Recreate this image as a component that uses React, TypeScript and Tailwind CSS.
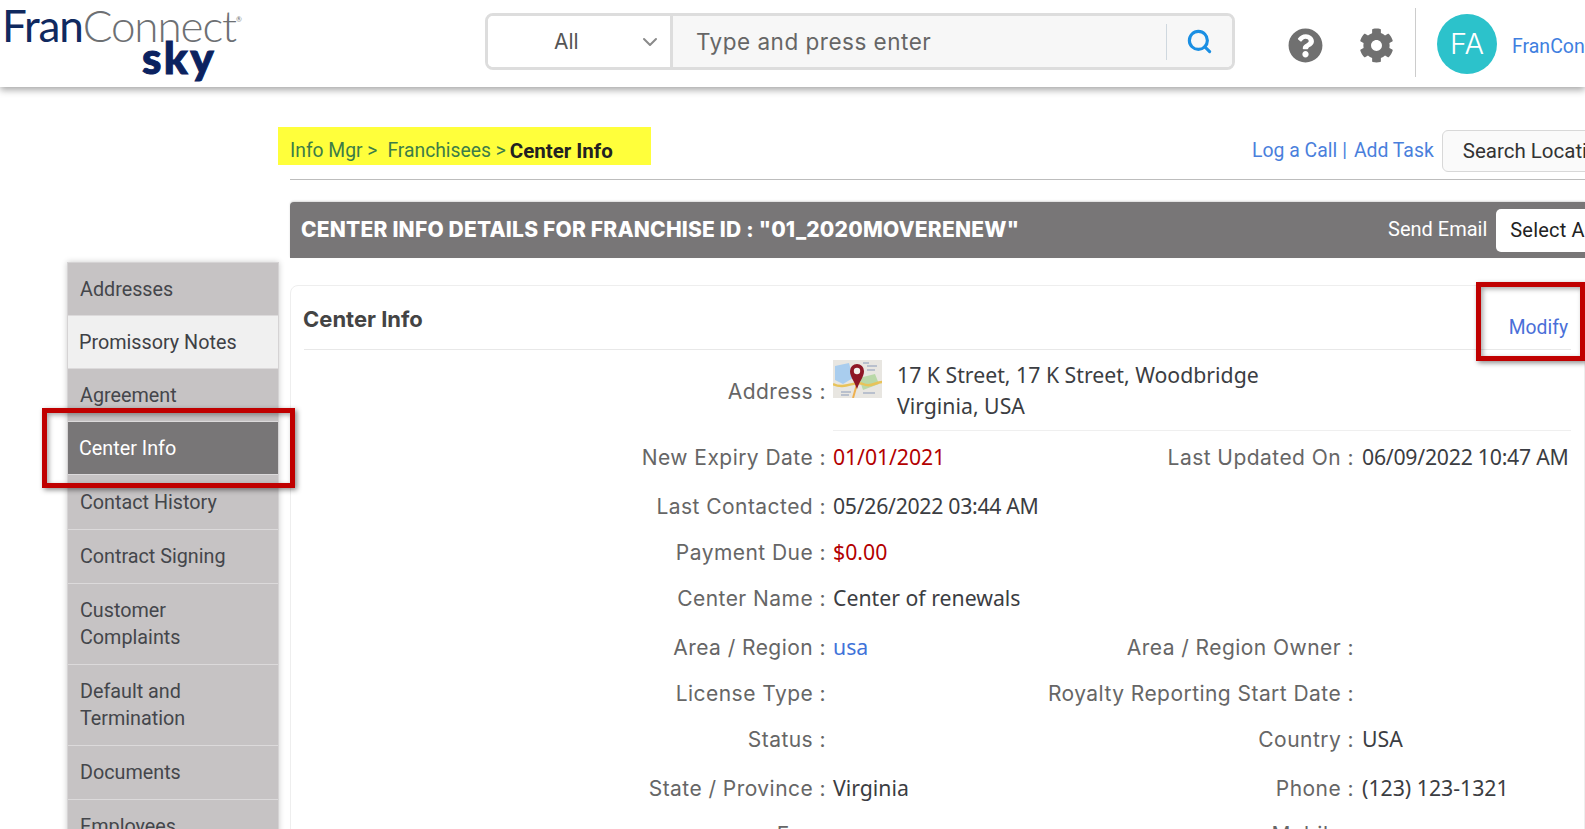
import { ChevronDown, Search } from "lucide-react";
import { FaCog, FaQuestionCircle } from "react-icons/fa";

const sidebarItems = [
    { label: "Addresses", cls: "h-[52px] bg-[#c6c3c4] text-[#44464b] pl-[12px]" },
    { label: "Promissory Notes", cls: "h-[52px] bg-[#f0f0f0] text-[#3e4045] pl-[11px]" },
    { label: "Agreement", cls: "h-[52px] bg-[#c6c3c4] text-[#44464b] pl-[12px]" },
    { label: "Center Info", cls: "h-[52px] bg-[#787677] text-white pl-[11px]" },
    { label: "Contact History", cls: "h-[54px] bg-[#c6c3c4] text-[#44464b] pl-[12px]" },
    { label: "Contract Signing", cls: "h-[53px] bg-[#c6c3c4] text-[#44464b] pl-[12px]" },
    { label: "Customer Complaints", cls: "h-[80px] bg-[#c6c3c4] text-[#44464b] pl-[12px] pr-[60px]" },
    { label: "Default and Termination", cls: "h-[80px] bg-[#c6c3c4] text-[#44464b] pl-[12px] pr-[60px]" },
    { label: "Documents", cls: "h-[53px] bg-[#c6c3c4] text-[#44464b] pl-[12px]" },
    { label: "Employees", cls: "h-[53px] bg-[#c6c3c4] text-[#44464b] pl-[12px]" },
];

function MapThumb() {
    return (
        <svg width="49" height="38" viewBox="0 0 49 38" className="shrink-0">
            <rect width="49" height="38" fill="#e8e6e1" />
            <path d="M2 6 L16 3 L20 18 L10 24 L2 20 Z" fill="#a9cdee" />
            <path d="M26 18 L42 14 L46 24 L30 30 Z" fill="#b9d8a8" />
            <path d="M0 24 C12 30 22 20 30 24 S42 22 49 22" stroke="#e8c35a" strokeWidth="2.5" fill="none" />
            <path d="M20 38 L24 24" stroke="#eeb04f" strokeWidth="2" />
            <path d="M8 32h10M8 35h8M30 33h12M34 6h10M34 10h8M30 3h6" stroke="#a9b4c6" strokeWidth="1.5" />
            <path d="M24 29 C21 20 17 17 17 11 A7 7 0 0 1 31 11 C31 17 27 20 24 29 Z" fill="#8f1726" />
            <circle cx="24" cy="11" r="3.2" fill="#f3f0ee" />
        </svg>
    );
}

const labelCls = "flex justify-end pt-[2px] font-['Inter',sans-serif] text-[21px] tracking-[0.45px] text-[#666666] whitespace-nowrap";

function Row({ cls, label, value, valueCls, label2, value2, value2Cls }: { cls?: string; label: string; value?: string; valueCls?: string; label2?: string; value2?: string; value2Cls?: string }) {
    return (
        <div className={`grid grid-cols-[522px_287px_241px_1fr] items-center h-[46px] ${cls ?? ""}`}>
            <div className={labelCls}>{label}</div>
            <div className={`pl-[7px] text-[21.25px] whitespace-nowrap ${valueCls ?? "text-[#3b3d42]"}`}>{value}</div>
            <div className={labelCls}>{label2}</div>
            <div className={`pl-2 text-[21.25px] text-[#3b3d42] whitespace-nowrap ${value2Cls ?? ""}`}>{value2}</div>
        </div>
    );
}

export default function App() {
    return (
        <div className="relative w-[1585px] h-[829px] overflow-hidden bg-white font-['Roboto',sans-serif]">
            {/* header */}
            <header className="relative z-10 h-[87px] flex items-start bg-white shadow-[0_3px_7px_rgba(0,0,0,0.35)]">
                <div className="w-[485px] shrink-0 pl-[2px] pt-[3px] font-['Lato',sans-serif] leading-none">
                    <div className="flex items-start text-[44px] tracking-[-1.1px] h-[41px]">
                        <span className="text-[#10295f]">Fran</span>
                        <span className="text-[#6d7073] font-light">Connect</span>
                        <span className="text-[7px] text-[#777] mt-[13px]">®</span>
                    </div>
                    <div className="pl-[140px] -mt-[6px] text-[44px] font-black tracking-[2.4px] text-[#0b2260] leading-[38px] [-webkit-text-stroke:1px_#0b2260]">sky</div>
                </div>
                <div className="mt-[13px] w-[750px] h-[57px] shrink-0 flex border-[3px] border-[#dddddd] rounded-[8px] overflow-hidden">
                    <div className="w-[185px] flex items-center bg-white border-r-[3px] border-[#dddddd] font-['Inter',sans-serif] text-[21px] text-[#555]">
                        <span className="ml-[66px]">All</span>
                        <ChevronDown size={24} className="ml-[59px] text-[#8a8a8a]" />
                    </div>
                    <div className="flex-1 flex items-center bg-[#f7f7f7] font-['Inter',sans-serif] text-[22.5px] tracking-[0.5px] text-[#666]">
                        <span className="ml-[23px]">Type and press enter</span>
                        <div className="ml-auto w-[66px] h-[36px] flex items-center justify-center border-l border-[#cfd8df]">
                            <Search size={27} strokeWidth={2.8} className="text-[#1b8fe3]" />
                        </div>
                    </div>
                </div>
                <FaQuestionCircle size={35} className="mt-[28px] ml-[53px] shrink-0 text-[#707070]" />
                <FaCog size={35} className="mt-[28px] ml-[36px] shrink-0 text-[#707070]" />
                <div className="mt-[8px] ml-[21px] w-px h-[69px] shrink-0 bg-[#cccccc]" />
                <div className="mt-[14px] ml-[21px] w-[60px] h-[60px] shrink-0 rounded-full bg-[#2cc2cb] flex items-center justify-center font-['Inter',sans-serif] font-light text-[29px] text-white">FA</div>
                <div className="mt-[32px] ml-[15px] text-[19.5px] text-[#3f7fe0] whitespace-nowrap">FranConnect Admin</div>
            </header>

            <div className="flex">
                {/* sidebar */}
                <div className="w-[278px] shrink-0 pl-[67px] pt-[175px]">
                    <nav className="w-[212px] flex flex-col gap-[1px] border border-[#d5d3d4] bg-[#dcdadb] shadow-[0_0_6px_rgba(0,0,0,0.2)]">
                        {sidebarItems.map((item) => (
                            <div key={item.label} className={`flex items-center text-[19.75px] leading-[27px] ${item.cls}`}>
                                <span>{item.label}</span>
                            </div>
                        ))}
                    </nav>
                </div>

                {/* content */}
                <main className="flex-1 min-w-0 pt-[40px]">
                    <div className="h-[38px] flex items-center whitespace-nowrap">
                        <div className="w-[373px] h-full shrink-0 flex items-center bg-[#ffff3b] pl-[12px] pt-[11px] text-[19.3px] text-[#3c7d48]">
                            <span>Info Mgr &gt;</span>
                            <span className="ml-[10px]">Franchisees &gt;</span>
                            <span className="ml-[4px] text-[20.5px] font-bold text-[#222]">Center Info</span>
                        </div>
                        <div className="ml-[601px] mt-[10px] flex items-center shrink-0 text-[19.4px] text-[#4a7fdc]">
                            <span>Log a Call</span>
                            <span className="ml-[5px]">|</span>
                            <span className="ml-[7px]">Add Task</span>
                            <div className="ml-[8px] w-[220px] h-[42px] pl-[20px] flex items-center border border-[#d8d8d8] rounded-l-[6px] bg-[#fafafa] text-[20.5px] text-[#333]">Search Location</div>
                        </div>
                    </div>
                    <div className="ml-[12px] mt-[14px] h-px bg-[#bdbdbd]" />

                    <div className="ml-[12px] mt-[22px] h-[56px] flex items-center bg-[#787677] rounded-tl-[4px] shadow-[0_-1px_2px_rgba(0,0,0,0.15)] whitespace-nowrap">
                        <div className="pl-[11px] w-[1098px] shrink-0 font-['Inter',sans-serif] font-extrabold text-[21px] tracking-[0.2px] text-white">CENTER INFO DETAILS FOR FRANCHISE ID : "01_2020MOVERENEW"</div>
                        <div className="-mt-[2px] text-[20px] text-white">Send Email</div>
                        <div className="ml-[9px] w-[160px] h-[43px] pl-[14px] flex items-center shrink-0 rounded-[5px] bg-white text-[20px] tracking-[0.2px] text-[#222]">Select Action</div>
                    </div>

                    <section className="ml-[12px] mt-[27px] h-[600px] px-[13px] border border-[#eeeeee] rounded-[8px]">
                        <div className="h-[64px] flex items-center justify-between border-b border-[#e8e8e8] pr-[3px]">
                            <h2 className="mt-[4px] -ml-[1px] font-['Inter',sans-serif] font-bold text-[22px] text-[#444]">Center Info</h2>
                            <span className="mt-[22px] text-[19.3px] text-[#4a6fd8]">Modify</span>
                        </div>
                        <div className="grid grid-cols-[522px_1fr] items-center h-[81px]">
                            <div className={labelCls}>Address :</div>
                            <div className="ml-[7px] h-full pt-[10px] flex items-start border-b border-[#efefef] font-['Noto_Sans',sans-serif]">
                                <MapThumb />
                                <div className="ml-[15px] -mt-[1px] text-[21.25px] leading-[31px] text-[#3b3d42]">
                                    <div>17 K Street, 17 K Street, Woodbridge</div>
                                    <div>Virginia, USA</div>
                                </div>
                            </div>
                        </div>
                        <div className="font-['Noto_Sans',sans-serif]">
                            <Row cls="mt-[3px]" label="New Expiry Date :" value="01/01/2021" valueCls="text-[#b30000] tracking-[-0.1px]" label2="Last Updated On :" value2="06/09/2022 10:47 AM" value2Cls="tracking-[-0.25px]" />
                            <Row cls="mt-[3px]" label="Last Contacted :" value="05/26/2022 03:44 AM" valueCls="text-[#3b3d42] tracking-[-0.3px]" />
                            <Row label="Payment Due :" value="$0.00" valueCls="text-[#b30000]" />
                            <Row label="Center Name :" value="Center of renewals" />
                            <Row cls="mt-[3px]" label="Area / Region :" value="usa" valueCls="text-[#3f73d9]" label2="Area / Region Owner :" />
                            <Row label="License Type :" label2="Royalty Reporting Start Date :" />
                            <Row label="Status :" label2="Country :" value2="USA" />
                            <Row cls="mt-[3px]" label="State / Province :" value="Virginia" label2="Phone :" value2="(123) 123-1321" />
                            <Row label="Fax :" label2="Mobile :" />
                        </div>
                    </section>
                </main>
            </div>

            {/* annotations drawn over the page */}
            <div className="absolute left-[42px] top-[408px] w-[253px] h-[80px] border-[5px] border-[#c00000] shadow-[2px_2px_5px_rgba(0,0,0,0.45),inset_2px_2px_5px_rgba(0,0,0,0.35)]" />
            <div className="absolute left-[1476px] top-[282px] w-[109px] h-[79px] border-[5px] border-[#c00000] shadow-[2px_2px_5px_rgba(0,0,0,0.45),inset_2px_2px_5px_rgba(0,0,0,0.35)]" />
        </div>
    );
}
